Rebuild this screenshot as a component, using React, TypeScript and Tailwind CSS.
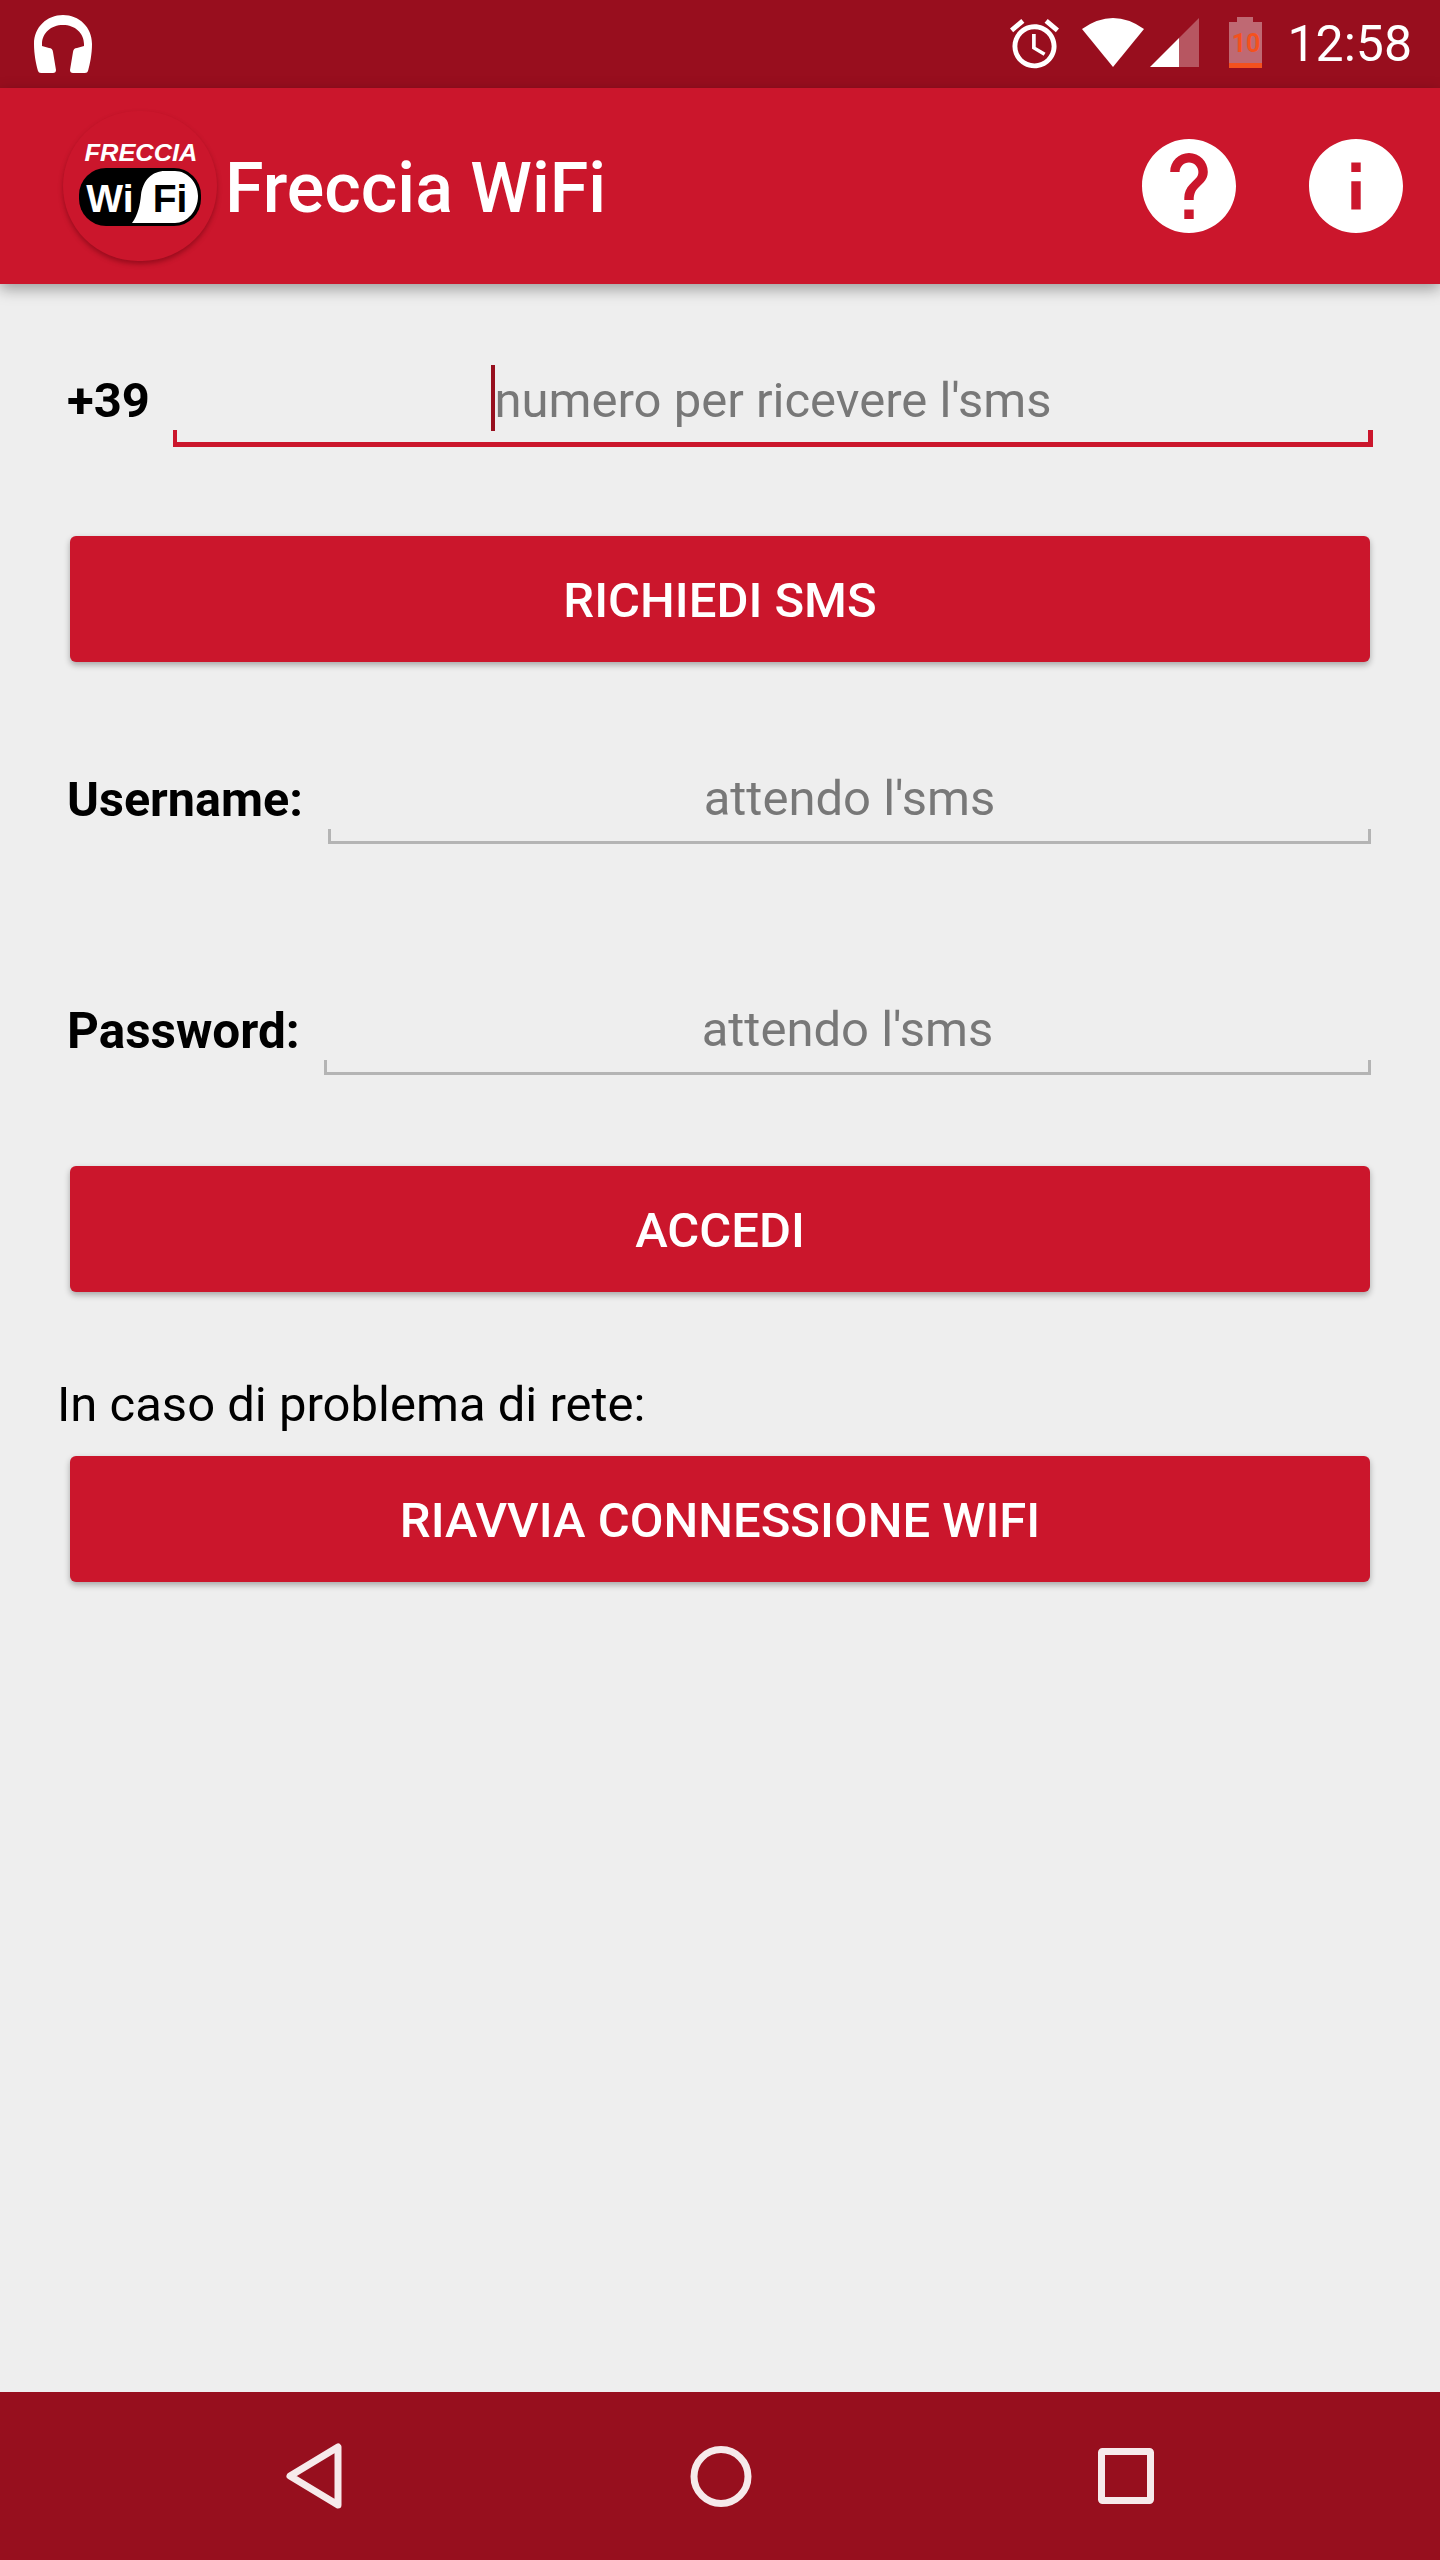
const RED = 'bg-[#cb162c]';

function Headset() {
  return (
    <svg width="60" height="60" viewBox="33 14 60 60" fill="#fff" className="block">
      <path d="M34 44C34 27 47 15 63 15C79 15 92 27 92 44C92 54 90 64 88 71Q87.5 73 85 73L73 73Q70 73 70 70L73 52Q73.5 48 77 48L84 46L84 44C84 33 75 25 63 25C51 25 42 33 42 44L42 46L49 48Q52.5 48 53 52L56 70Q56 73 53 73L41 73Q38.5 73 38 71C36 64 34 54 34 44Z" />
    </svg>
  );
}

function StatusIcons() {
  return (
    <svg width="252" height="54" viewBox="1010 18 252 54" className="block">
      <g transform="translate(1010 20) scale(2.45) translate(-2 -1.86)" fill="#fff">
        <path d="M22 5.72l-4.6-3.86-1.29 1.53 4.6 3.86L22 5.72zM7.88 3.39L6.6 1.86 2 5.71l1.29 1.53 4.59-3.85zM12.5 8H11v6l4.75 2.85.75-1.23-4-2.37V8zM12 4c-4.97 0-9 4.03-9 9s4.03 9 9 9c4.97 0 9-4.03 9-9s-4.03-9-9-9zm0 16c-3.87 0-7-3.13-7-7s3.13-7 7-7 7 3.13 7 7-3.13 7-7 7z" />
      </g>
      <path d="M1082 30Q1113 8 1144 30L1113 68Z" fill="#fff" />
      <path d="M1150 68L1179 39L1179 68Z" fill="#fff" />
      <path d="M1179 39L1199 19L1199 68L1179 68Z" fill="#fff" fillOpacity="0.3" />
      <path d="M1237 18H1253V23H1262V64H1229V23H1237Z" fill="#fff" fillOpacity="0.38" />
      <rect x="1229" y="64" width="33" height="5" fill="#f4511e" />
      <text x="1246" y="53" textAnchor="middle" fontFamily="Roboto, sans-serif" fontWeight="700" fontSize="25" fill="#f4511e">10</text>
    </svg>
  );
}

function Logo() {
  return (
    <div className="h-[150px] w-[154px] shrink-0 rounded-full bg-[#cb162c] shadow-[0_3px_5px_rgba(90,0,10,0.45)]">
      <svg width="154" height="150" viewBox="63 112 154 150" className="block">
        <text x="141" y="162" textAnchor="middle" fontFamily="'Liberation Sans', sans-serif" fontStyle="italic" fontWeight="700" fontSize="23" textLength="113" lengthAdjust="spacingAndGlyphs" fill="#fff">FRECCIA</text>
        <rect x="79" y="169" width="122" height="58" rx="27" fill="#000" />
        <path d="M132 224C138 216 140 206 141 196C143 181 152 172 165 172H175C187 172 198 183 198 197C198 212 187 224 175 224Z" fill="#fff" />
        <text x="110" y="213" textAnchor="middle" fontFamily="'Liberation Sans', sans-serif" fontWeight="700" fontSize="39" fill="#fff">Wi</text>
        <text x="170" y="213" textAnchor="middle" fontFamily="'Liberation Sans', sans-serif" fontWeight="700" fontSize="39" fill="#000">Fi</text>
      </svg>
    </div>
  );
}

function CircleIcon({ d }: { d: string }) {
  return (
    <svg width="94" height="94" viewBox="2 2 20 20" fill="#fff" className="block">
      <path d={d} />
    </svg>
  );
}

function Field({ width, placeholder, active }: { width: string; placeholder: string; active?: boolean }) {
  const color = active ? 'border-[#cb162c]' : 'border-[#b4b4b4]';
  return (
    <div className={`relative flex h-[82px] items-center justify-center ${width} ${color} ${active ? 'border-b-[5px]' : 'border-b-[3px]'}`}>
      <input
        readOnly
        placeholder={placeholder}
        className="mb-[6px] w-full bg-transparent text-center font-['Roboto',sans-serif] text-[49px] leading-[56px] text-black outline-none placeholder:text-[#787878]"
      />
      <span className={`absolute bottom-0 left-0 h-[12px] ${active ? 'w-[4px] bg-[#cb162c]' : 'w-[3px] bg-[#b4b4b4]'}`} />
      <span className={`absolute bottom-0 right-0 h-[12px] ${active ? 'w-[5px] bg-[#cb162c]' : 'w-[3px] bg-[#b4b4b4]'}`} />
      {active && <span className="absolute left-[318px] top-0 h-[66px] w-[4px] bg-[#970f1e]" />}
    </div>
  );
}

function ActionButton({ label }: { label: string }) {
  return (
    <button className={`ml-[3px] flex h-[126px] w-[1300px] items-center justify-center rounded-[6px] ${RED} pt-[3px] font-['Roboto',sans-serif] text-[49px] font-medium text-white shadow-[0_3px_6px_rgba(0,0,0,0.3)]`}>
      {label}
    </button>
  );
}

export default function App() {
  return (
    <div className="flex h-[2560px] w-[1440px] flex-col overflow-hidden bg-[#eeeeee] font-['Roboto',sans-serif]">
      <div className="flex h-[88px] shrink-0 items-center justify-between bg-[#980e1e] pl-[33px] pr-[28px]">
        <Headset />
        <div className="flex items-center gap-[25px]">
          <StatusIcons />
          <span className="text-[50px] leading-none text-white">12:58</span>
        </div>
      </div>

      <header className={`relative z-10 flex h-[196px] shrink-0 items-center ${RED} pl-[63px] pr-[37px] shadow-[0_5px_14px_rgba(0,0,0,0.35)]`}>
        <Logo />
        <h1 className="ml-[8px] pt-[3px] text-[70px] font-medium leading-none text-white">Freccia WiFi</h1>
        <div className="ml-auto flex items-center gap-[73px]">
          <CircleIcon d="M12 2C6.48 2 2 6.48 2 12s4.48 10 10 10 10-4.48 10-10S17.52 2 12 2zm1 17h-2v-2h2v2zm2.07-7.75l-.9.92C13.45 12.9 13 13.5 13 15h-2v-.5c0-1.1.45-2.1 1.17-2.83l1.24-1.26c.37-.36.59-.86.59-1.41 0-1.1-.9-2-2-2s-2 .9-2 2H8c0-2.21 1.79-4 4-4s4 1.79 4 4c0 .88-.36 1.68-.93 2.25z" />
          <CircleIcon d="M12 2C6.48 2 2 6.48 2 12s4.48 10 10 10 10-4.48 10-10S17.52 2 12 2zm1 15h-2v-6h2v6zm0-8h-2V7h2v2z" />
        </div>
      </header>

      <main className="flex flex-1 flex-col pl-[67px] pr-[67px]">
        <div className="mt-[81px] flex items-center justify-between">
          <span className="mb-[12px] text-[49px] font-bold leading-none text-black">+39</span>
          <Field width="w-[1200px]" placeholder="numero per ricevere l'sms" active />
        </div>
        <div className="mt-[89px]">
          <ActionButton label="RICHIEDI SMS" />
        </div>

        <div className="mt-[100px] flex items-center justify-between">
          <span className="mb-[5px] text-[48.5px] font-bold leading-none text-black">Username:</span>
          <Field width="w-[1043px] mr-[2px]" placeholder="attendo l'sms" />
        </div>
        <div className="mt-[149px] flex items-center justify-between">
          <span className="mb-[5px] text-[49.5px] font-bold leading-none text-black">Password:</span>
          <Field width="w-[1047px] mr-[2px]" placeholder="attendo l'sms" />
        </div>
        <div className="mt-[91px]">
          <ActionButton label="ACCEDI" />
        </div>

        <p className="-ml-[10px] mt-[84px] text-[49px] leading-[58px] text-black">In caso di problema di rete:</p>
        <div className="mt-[22px]">
          <ActionButton label="RIAVVIA CONNESSIONE WIFI" />
        </div>
      </main>

      <nav className="flex h-[168px] shrink-0 items-center justify-between bg-[#970f1e] pl-[275px] pr-[274px]">
        <svg width="80" height="80" viewBox="0 0 80 80" fill="none" stroke="#f6eaeb" strokeWidth="7" strokeLinejoin="round" className="block">
          <path d="M63 11V69L15 40Z" />
        </svg>
        <svg width="80" height="80" viewBox="0 0 80 80" fill="none" stroke="#f6eaeb" strokeWidth="7" className="block">
          <circle cx="40" cy="40.5" r="27" />
        </svg>
        <svg width="80" height="80" viewBox="0 0 80 80" fill="none" stroke="#f6eaeb" strokeWidth="7" strokeLinejoin="round" className="block">
          <rect x="15.5" y="15.5" width="49" height="49" rx="1" />
        </svg>
      </nav>
    </div>
  );
}
